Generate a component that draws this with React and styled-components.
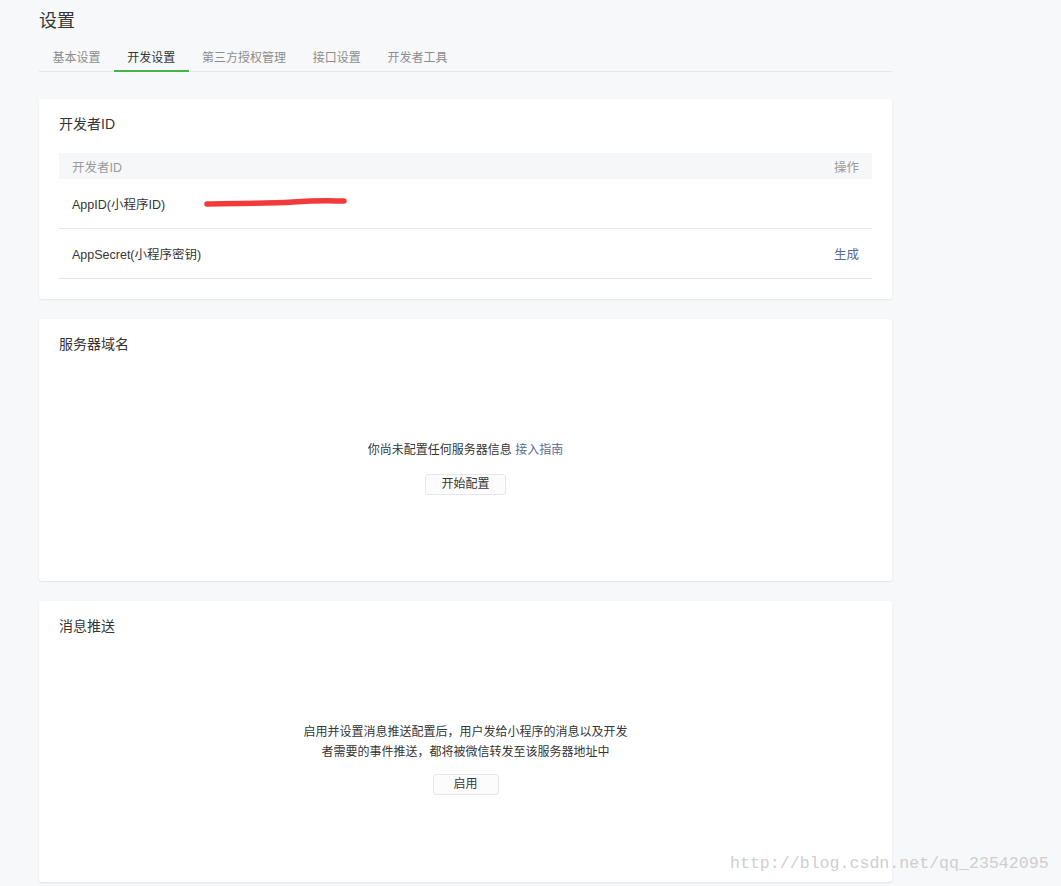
import React from 'react';
import styled, { createGlobalStyle } from 'styled-components';

const GlobalStyle = createGlobalStyle`
	html, body {
		margin: 0;
		padding: 0;
		background: #f6f8f9;
	}
	body {
		font-family: "Liberation Sans", "Noto Sans CJK SC", sans-serif;
		color: #353535;
	}
`;

const Page = styled.div`
	position: relative;
	min-height: 886px;
	padding: 9px 0 20px 39px;
	box-sizing: border-box;
`;

const Main = styled.div`
	width: 853px;
`;

const PageTitle = styled.h2`
	margin: 0;
	font-size: 18px;
	line-height: 24px;
	font-weight: normal;
	color: #353535;
`;

const TabBar = styled.div`
	display: flex;
	margin-top: 11px;
	border-bottom: 1px solid #e4e8eb;
`;

const Tab = styled.div`
	padding: 2px 13.4px 0;
	height: 24px;
	line-height: 24px;
	font-size: 12px;
	color: ${({ active }) => (active ? '#353535' : '#8d8d8d')};
	border-bottom: 2px solid ${({ active }) => (active ? '#44b549' : 'transparent')};
	margin-bottom: -1px;
	cursor: pointer;
`;

const Cards = styled.div`
	display: flex;
	flex-direction: column;
	gap: 20px;
	margin-top: 27px;
`;

const Card = styled.section`
	background: #fff;
	border-radius: 3px;
	box-shadow: 0 1px 2px rgba(0, 0, 0, 0.09);
	padding: 15px 20px 20px;
`;

const CardTitle = styled.h3`
	margin: 0;
	font-size: 14px;
	line-height: 20px;
	font-weight: normal;
	color: #353535;
`;

const Table = styled.div`
	margin-top: 19px;
	font-size: 12.5px;
`;

const HeadRow = styled.div`
	display: flex;
	justify-content: space-between;
	align-items: center;
	height: 26px;
	padding: 0 13px;
	background: #f6f7f9;
	color: #9a9a9a;
`;

const Row = styled.div`
	display: flex;
	align-items: center;
	height: 49px;
	padding: 0 13px;
	border-bottom: 1px solid #e7e7eb;
`;

const Label = styled.div`
	width: 135px;
	flex: none;
`;

const Value = styled.div`
	flex: 1;
	position: relative;
	height: 20px;
`;

const Link = styled.a`
	color: #576b95;
	text-decoration: none;
	cursor: pointer;
`;

const Empty = styled.div`
	display: flex;
	flex-direction: column;
	align-items: center;
	padding: 86px 0 ${({ bottom }) => bottom}px;
	font-size: 12px;
	line-height: 20px;
	text-align: center;
`;

const Tip = styled.p`
	margin: 0;
	width: ${({ width }) => width || 'auto'};
	color: #353535;
`;

const Button = styled.button`
	margin-top: ${({ gap }) => gap}px;
	min-width: 66px;
	height: 21px;
	padding: 0 15px;
	border: 1px solid #e4e8eb;
	border-radius: 3px;
	background: #fcfcfc;
	font-family: inherit;
	font-size: 12px;
	line-height: 19px;
	color: #353535;
	cursor: pointer;
`;

const Watermark = styled.div`
	position: absolute;
	left: 730px;
	top: 854px;
	font-family: "Liberation Mono", monospace;
	font-size: 16.6px;
	color: #cfcfcf;
	white-space: nowrap;
`;

const Scribble = () => (
	<svg width="150" height="14" viewBox="0 0 150 14" style={{ position: 'absolute', left: -4, top: 1 }}>
		<path d="M4 9 C 30 8, 60 9, 90 7 S 130 6, 141 6" stroke="#f23a3a" strokeWidth="5.5" fill="none" strokeLinecap="round" />
	</svg>
);

const tabs = ['基本设置', '开发设置', '第三方授权管理', '接口设置', '开发者工具'];

export default function App() {
	return (
		<>
			<GlobalStyle />
			<Page>
				<Main>
					<PageTitle>设置</PageTitle>
					<TabBar>
						{tabs.map((t) => (
							<Tab key={t} active={t === '开发设置'}>{t}</Tab>
						))}
					</TabBar>
					<Cards>
						<Card>
							<CardTitle>开发者ID</CardTitle>
							<Table>
								<HeadRow>
									<span>开发者ID</span>
									<span>操作</span>
								</HeadRow>
								<Row>
									<Label>AppID(小程序ID)</Label>
									<Value><Scribble /></Value>
								</Row>
								<Row>
									<Label>AppSecret(小程序密钥)</Label>
									<Value />
									<Link>生成</Link>
								</Row>
							</Table>
						</Card>
						<Card>
							<CardTitle>服务器域名</CardTitle>
							<Empty bottom={66}>
								<Tip>你尚未配置任何服务器信息 <Link>接入指南</Link></Tip>
								<Button gap={14}>开始配置</Button>
							</Empty>
						</Card>
						<Card>
							<CardTitle>消息推送</CardTitle>
							<Empty bottom={67}>
								<Tip width="330px">启用并设置消息推送配置后，用户发给小程序的消息以及开发者需要的事件推送，都将被微信转发至该服务器地址中</Tip>
								<Button gap={12}>启用</Button>
							</Empty>
						</Card>
					</Cards>
				</Main>
				<Watermark>http://blog.csdn.net/qq_23542095</Watermark>
			</Page>
		</>
	);
}
